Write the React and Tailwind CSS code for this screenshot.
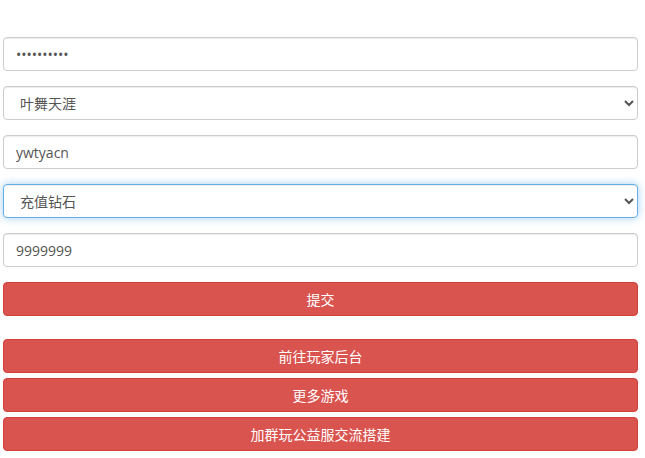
const fieldShape =
  "block w-full h-[34px] px-3 py-1.5 text-[14px] leading-[1.43] text-[#555] bg-white border rounded-[4px] focus:outline-none";

const fieldBase =
  fieldShape + " border-[#ccc] shadow-[inset_0_1px_1px_rgba(0,0,0,0.075)]";

const fieldFocus =
  fieldShape + " border-[#66afe9] shadow-[inset_0_1px_1px_rgba(0,0,0,0.075),0_0_8px_rgba(102,175,233,0.6)]";

const btnBase =
  "block w-full h-[34px] text-[14px] text-white bg-[#d9534f] border border-[#d43f3a] rounded-[4px] text-center";

const App = () => {
  return (
    <div
      className="min-h-screen bg-white px-[3px] pt-[37px] pr-[7px]"
      style={{ fontFamily: '"Open Sans", "Noto Sans CJK SC", sans-serif' }}
    >
      <form className="flex flex-col gap-[15px]">
        <input type="password" defaultValue="asdfghjklq" className={fieldBase} />
        <select defaultValue="1" className={fieldBase}>
          <option value="1">叶舞天涯</option>
        </select>
        <input type="text" defaultValue="ywtyacn" className={fieldBase} />
        <select defaultValue="1" className={fieldFocus}>
          <option value="1">充值钻石</option>
        </select>
        <input type="text" defaultValue="9999999" className={fieldBase} />
        <button type="button" className={btnBase}>提交</button>
      </form>

      <div className="mt-[23px] flex flex-col gap-[5px]">
        <button type="button" className={btnBase}>前往玩家后台</button>
        <button type="button" className={btnBase}>更多游戏</button>
        <button type="button" className={btnBase}>加群玩公益服交流搭建</button>
      </div>
    </div>
  );
};

export default App;
